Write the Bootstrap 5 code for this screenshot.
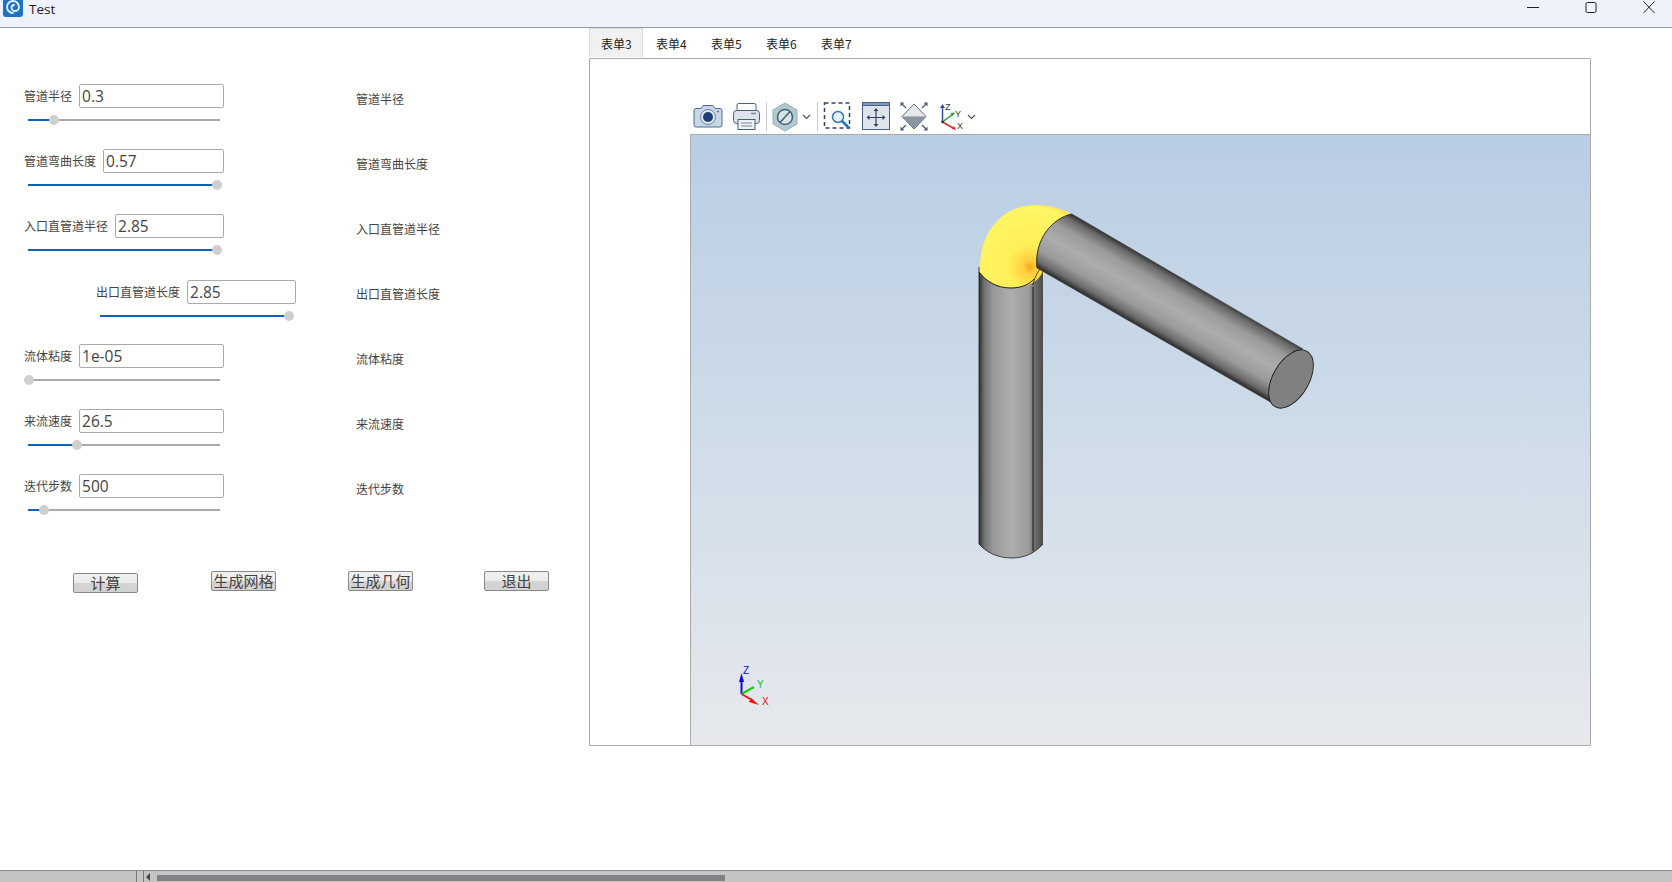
<!DOCTYPE html>
<html lang="zh">
<head>
<meta charset="utf-8">
<title>Test</title>
<link href="https://cdn.jsdelivr.net/npm/bootstrap@5.3.0/dist/css/bootstrap.min.css" rel="stylesheet">
<style>
html,body{height:100%;overflow:hidden}
body{background:#fff;font-family:"Noto Sans CJK SC","Noto Sans",sans-serif;font-size:12px;color:#444}
.shell{height:882px}
.titlebar{height:28px;background:#eef2fa;border-bottom:1px solid #999;color:#1f1f1f;font-family:"Open Sans","Noto Sans",sans-serif;font-size:13.500px}
.titlebar .ttl{margin-left:6px;line-height:18px}
.logo{margin-left:3px;margin-top:-3px}
.winbtns{gap:46px;margin-right:17px}
.workspace{height:842px}
.leftpanel{width:589px;padding-top:56px;flex:none}
.rowitem{height:65px}
.rowshift{margin-top:1px;margin-bottom:-1px}
.rowshift .echo{padding-top:2px}
.field{width:356px;padding-left:24px;flex:none}
.fieldwide{width:356px;padding-left:96px;flex:none}
.fieldline{height:24px;width:200px}
.fieldlabel{white-space:nowrap;margin-right:7px;line-height:24px;color:#444}
.valbox.form-control{height:24px;min-height:24px;padding:0 2px;border:1px solid #aaa;border-radius:2px;font-family:"Open Sans","Noto Sans",sans-serif;font-size:15.500px;line-height:22px;color:#444;flex:1 1 0;min-width:0;box-shadow:none}
.track{position:relative;width:192px;height:2px;background:#aaa;margin:11px 0 0 4px}
.trackfill{height:2px;background:#0f62b5}
.knob{position:absolute;top:-4px;width:10px;height:10px;margin-left:-5px;border-radius:50%;background:#cfcfcf}
.echo{line-height:24px;padding-top:3px;color:#444}
.btnrow{margin:32px 0 0 73px}
.act.btn{width:65px;height:20px;padding:0;border:1px solid #888;border-radius:2px;font-size:15px;line-height:16px;color:#444;background:linear-gradient(#f0f0f0 0,#ebebeb 50%,#d4d4d4 50%,#d2d2d2 100%)}
.actlow{margin-top:2px}
.gapa{margin-left:73px}
.gapb{margin-left:72px}
.gapc{margin-left:71px}
.tabzone{width:1002px;flex:none}
.tabstrip{height:30px}
.tabitem{width:55px;height:29px;padding-left:12px;line-height:32px;color:#222;white-space:nowrap;text-decoration:none}
.tabitem.sel{width:54px;background:#f1f1f1;border:1px solid #ddd;border-bottom:0;padding-left:11px;margin-right:1px;line-height:30px}
.tabpane{height:688px;border:1px solid #aaa;border-radius:1px;padding-left:100px}
.toolline{height:75px;padding-top:41px}
.toolline svg{display:block;flex:none}
.viewer{height:611px;border-top:1px solid #aaa;border-left:1px solid #aaa;background:linear-gradient(#b9cde3 0,#cddbe9 45%,#e6e8ec 100%);overflow:hidden}
.viewer svg{display:block}
.statusline{height:12px;border-top:1px solid #8a8a8a;background:#c4c4c4;padding-left:136px}
.sbdiv{width:1px;height:11px;background:#777;flex:none}
.sbdivb{margin-left:6px}
.sbarrow{width:0;height:0;border-top:4px solid transparent;border-bottom:4px solid transparent;border-right:4px solid #444;margin:2px 0 0 2px;flex:none}
.sbthumb{width:568px;height:6px;background:#7f8386;margin:4px 0 0 7px;flex:none}
</style>
</head>
<body>
<div class="shell d-flex flex-column">
  <div class="titlebar d-flex align-items-start justify-content-between">
    <div class="d-flex align-items-start">
      <svg class="logo" width="20" height="20" viewBox="0 0 20 20"><rect width="20" height="20" rx="3" fill="#1c75c4"/><path d="M10 16a6 6 0 1 1 6-6c0 2.600-2 4-4 4a3.500 3.500 0 0 1-3.500-3.500A2.600 2.600 0 0 1 11 8" fill="none" stroke="#e6f2fb" stroke-width="1.800" stroke-linecap="round"/></svg>
      <span class="ttl">Test</span>
    </div>
    <div class="winbtns d-flex align-items-start">
      <svg width="12" height="14" viewBox="0 0 12 14"><path d="M0 7.500H12" stroke="#222"/></svg>
      <svg width="12" height="14" viewBox="0 0 12 14"><rect x="1" y="2.500" width="10" height="10" rx="1.500" fill="none" stroke="#222"/></svg>
      <svg width="12" height="14" viewBox="0 0 12 14"><path d="M.5 1.500L11.500 13M11.500 1.500L.5 13" stroke="#222"/></svg>
    </div>
  </div>
  <div class="workspace d-flex">
    <div class="leftpanel">
      <div class="rowitem d-flex">
        <div class="field"><div class="fieldline d-flex"><span class="fieldlabel">管道半径</span><input class="form-control valbox" value="0.3"></div>
          <div class="track"><div class="trackfill" style="width:13.500%"></div><div class="knob" style="left:13.500%"></div></div></div>
        <div class="echo">管道半径</div>
      </div>
      <div class="rowitem d-flex">
        <div class="field"><div class="fieldline d-flex"><span class="fieldlabel">管道弯曲长度</span><input class="form-control valbox" value="0.57"></div>
          <div class="track"><div class="trackfill" style="width:98.500%"></div><div class="knob" style="left:98.500%"></div></div></div>
        <div class="echo">管道弯曲长度</div>
      </div>
      <div class="rowitem d-flex">
        <div class="field"><div class="fieldline d-flex"><span class="fieldlabel">入口直管道半径</span><input class="form-control valbox" value="2.85"></div>
          <div class="track"><div class="trackfill" style="width:98.500%"></div><div class="knob" style="left:98.500%"></div></div></div>
        <div class="echo">入口直管道半径</div>
      </div>
      <div class="rowitem rowshift d-flex">
        <div class="fieldwide"><div class="fieldline d-flex"><span class="fieldlabel">出口直管道长度</span><input class="form-control valbox" value="2.85"></div>
          <div class="track"><div class="trackfill" style="width:98.500%"></div><div class="knob" style="left:98.500%"></div></div></div>
        <div class="echo">出口直管道长度</div>
      </div>
      <div class="rowitem d-flex">
        <div class="field"><div class="fieldline d-flex"><span class="fieldlabel">流体粘度</span><input class="form-control valbox" value="1e-05"></div>
          <div class="track"><div class="trackfill" style="width:0.500%"></div><div class="knob" style="left:0.500%"></div></div></div>
        <div class="echo">流体粘度</div>
      </div>
      <div class="rowitem d-flex">
        <div class="field"><div class="fieldline d-flex"><span class="fieldlabel">来流速度</span><input class="form-control valbox" value="26.5"></div>
          <div class="track"><div class="trackfill" style="width:25.500%"></div><div class="knob" style="left:25.500%"></div></div></div>
        <div class="echo">来流速度</div>
      </div>
      <div class="rowitem d-flex">
        <div class="field"><div class="fieldline d-flex"><span class="fieldlabel">迭代步数</span><input class="form-control valbox" value="500"></div>
          <div class="track"><div class="trackfill" style="width:8.500%"></div><div class="knob" style="left:8.500%"></div></div></div>
        <div class="echo">迭代步数</div>
      </div>
      <div class="btnrow d-flex align-items-start">
        <button class="btn act actlow" type="button">计算</button>
        <button class="btn act gapa" type="button">生成网格</button>
        <button class="btn act gapb" type="button">生成几何</button>
        <button class="btn act gapc" type="button">退出</button>
      </div>
    </div>
    <div class="tabzone">
      <div class="tabstrip d-flex align-items-start">
        <a class="tabitem sel" href="#">表单3</a>
        <a class="tabitem" href="#">表单4</a>
        <a class="tabitem" href="#">表单5</a>
        <a class="tabitem" href="#">表单6</a>
        <a class="tabitem" href="#">表单7</a>
      </div>
      <div class="tabpane">
        <div class="toolline">
          <svg width="290" height="32" viewBox="690 100 290 32">
            <!-- camera -->
            <path d="M696 108.500h5l2-3h10l2 3h5a2 2 0 0 1 2 2v14.500a2 2 0 0 1-2 2h-24a2 2 0 0 1-2-2v-14.500a2 2 0 0 1 2-2z" fill="#c9d6e6" stroke="#4e6a94" stroke-width="1"/>
            <circle cx="708" cy="117" r="7.500" fill="#dfe7f1" stroke="#6b83a6"/><circle cx="708" cy="117" r="5" fill="#1f3f78"/>
            <circle cx="718" cy="111.500" r="1" fill="#4e6a94"/>
            <!-- printer -->
            <rect x="737" y="103.500" width="19" height="9" rx="1.500" fill="#fff" stroke="#4e5f78"/>
            <rect x="733.500" y="110.500" width="26" height="13" rx="3" fill="#dde3ea" stroke="#4e5f78"/>
            <rect x="738" y="119.500" width="17" height="10" fill="#eef1f5" stroke="#4e5f78"/>
            <path d="M741 123h11M741 126h11" stroke="#7c8a9c"/><path d="M751 113.500h5" stroke="#7c8a9c" stroke-width="1.500"/>
            <path d="M766.500 102v29" stroke="#c8c8c8"/>
            <!-- prohibit -->
            <path d="M785 103l12 7v14l-12 7-12-7v-14z" fill="#b4c8ce" stroke="#8fb0b8"/>
            <circle cx="785" cy="117" r="7.500" fill="#d9e4e6" stroke="#3d6a76" stroke-width="1.600"/><path d="M780 122.500L790 111.500" stroke="#3d6a76" stroke-width="1.600"/>
            <path d="M803 115l3.500 3.500 3.500-3.500" fill="none" stroke="#555" stroke-width="1.200"/>
            <path d="M817.500 102v29" stroke="#c8c8c8"/>
            <!-- zoom box -->
            <rect x="824.500" y="103" width="25" height="25" fill="none" stroke="#2e4468" stroke-width="1.500" stroke-dasharray="4 3"/>
            <circle cx="838" cy="117" r="5.500" fill="#eaf1f8" stroke="#3a78b8" stroke-width="1.500"/><path d="M842 121l7 7" stroke="#1e78c8" stroke-width="2.600"/>
            <!-- pan -->
            <rect x="862.500" y="102.500" width="27" height="27" fill="#dfe3ec" stroke="#47608a"/><rect x="862.500" y="102.500" width="27" height="3" fill="#8499bb" stroke="#47608a"/>
            <path d="M876 110v15M868.500 117.500h15" stroke="#2d4468" stroke-width="1.200"/>
            <path d="M876 108l-2.500 3h5zM876 127l-2.500-3h5zM866.500 117.500l3-2.500v5zM885.500 117.500l-3-2.500v5z" fill="#2d4468"/>
            <!-- fit -->
            <path d="M914 104l12 12.500-12 12.500-12-12.500z" fill="#d6dbe3"/>
            <path d="M914 104.500l11.500 12h-23z" fill="#e4e7ec"/><path d="M914 128.500l11.500-12h-23z" fill="#8e95a2"/>
            <path d="M914 104l12 12.500-12 12.500-12-12.500z" fill="none" stroke="#5f6b7c"/>
            <path d="M901 103l5 5M927 103l-5 5M901 130l5-5M927 130l-5-5" stroke="#47608a" stroke-width="1.400"/>
            <path d="M900.500 102.500h4l-4 4zM927.500 102.500h-4l4 4zM900.500 130.500h4l-4-4zM927.500 130.500h-4l4-4z" fill="#47608a"/>
            <!-- axes -->
            <path d="M942.500 122V107" stroke="#2a4fa8" stroke-width="1.500"/><path d="M942.500 104l-2.500 4h5z" fill="#2a4fa8"/>
            <path d="M942.500 122L953 114" stroke="#249a3c" stroke-width="1.500"/><path d="M955 112.500l-4.500.5 2 3z" fill="#249a3c"/>
            <path d="M942.500 122L953 128" stroke="#e02828" stroke-width="1.500"/><path d="M956 130l-2-4-2 3z" fill="#e02828"/>
            <circle cx="942.500" cy="122" r="1.300" fill="#333"/>
            <text x="945" y="110" font-family="Liberation Sans,sans-serif" font-size="9" fill="#333">Z</text>
            <text x="955" y="116.500" font-family="Liberation Sans,sans-serif" font-size="9" fill="#333">Y</text>
            <text x="957" y="129" font-family="Liberation Sans,sans-serif" font-size="9" fill="#333">X</text>
            <path d="M968 115l3.500 3.500 3.500-3.500" fill="none" stroke="#555" stroke-width="1.200"/>
          </svg>
        </div>
        <div class="viewer">
          <svg width="899" height="610" viewBox="691 135 899 610">
            <defs>
              <linearGradient id="vcyl" gradientUnits="userSpaceOnUse" x1="979" y1="0" x2="1043" y2="0">
                <stop offset="0" stop-color="#2e2e2e"/><stop offset=".08" stop-color="#707070"/><stop offset=".22" stop-color="#989898"/><stop offset=".5" stop-color="#adadad"/><stop offset=".78" stop-color="#9c9c9c"/><stop offset=".85" stop-color="#747474"/><stop offset="1" stop-color="#4a4a4a"/>
              </linearGradient>
              <linearGradient id="hcyl" gradientUnits="userSpaceOnUse" x1="1187" y1="281" x2="1156" y2="335">
                <stop offset="0" stop-color="#383838"/><stop offset=".08" stop-color="#6a6a6a"/><stop offset=".25" stop-color="#9b9b9b"/><stop offset=".5" stop-color="#adadad"/><stop offset=".75" stop-color="#9b9b9b"/><stop offset=".92" stop-color="#6a6a6a"/><stop offset="1" stop-color="#333"/>
              </linearGradient>
              <radialGradient id="elbow" gradientUnits="userSpaceOnUse" cx="1030" cy="267" r="70">
                <stop offset="0" stop-color="#f7a81f"/><stop offset=".1" stop-color="#ffcf3e"/><stop offset=".3" stop-color="#ffee58"/><stop offset=".85" stop-color="#fff664"/><stop offset="1" stop-color="#ffd83e"/>
              </radialGradient>
            </defs>
            <path d="M980 267C980 232 1003 205 1035 205C1052 205 1065 210 1073 215L1045 272L1040 290L1000 292L980 275Z" fill="url(#elbow)"/>
            <path d="M979 267V544C986 552 997 558 1012 558C1026 558 1036 552 1043 544V270C1041 280 1028 288 1011 288C996 288 986 281 979 272Z" fill="url(#vcyl)"/>
            <path d="M979 267V544C986 552 997 558 1012 558C1026 558 1036 552 1043 544" fill="none" stroke="#222" stroke-width=".8"/>
            <path d="M979 272C986 281 996 288 1011 288C1022 288 1030 284 1034 279" fill="none" stroke="#1a1a1a" stroke-width="1"/>
            <path d="M1033 287V551" stroke="#1a1a1a" stroke-width="1"/>
            <path d="M1033 285C1034 278 1038 272 1040 269" fill="none" stroke="#1a1a1a" stroke-width=".8"/>
            <path d="M1072 214L1303 349L1272 403L1037 268C1034 240 1052 218 1072 214Z" fill="url(#hcyl)"/>
            <path d="M1037 268C1034 240 1052 218 1072 214" fill="none" stroke="#1c1c1c" stroke-width=".9"/>
            <path d="M1072 214L1303 349M1272 403L1037 268" fill="none" stroke="#333" stroke-width=".5"/>
            <ellipse cx="1291" cy="379" rx="32" ry="18" transform="rotate(-60 1291 379)" fill="#808080" stroke="#1f1f1f" stroke-width=".9"/>
            <!-- triad -->
            <path d="M741.500 694V680" stroke="#0a0ae0" stroke-width="2"/><path d="M741.500 673l-2.500 9h5z" fill="#0a0ae0"/>
            <path d="M741.500 694L754 687" stroke="#10d010" stroke-width="2.200"/>
            <path d="M741.500 694L752 700" stroke="#f01010" stroke-width="2"/><path d="M759 705l-8-7-2 4z" fill="#f01010"/>
            <text x="743" y="674" font-family="Liberation Sans,sans-serif" font-size="10" fill="#0a0ae0">Z</text>
            <text x="757" y="688" font-family="Liberation Sans,sans-serif" font-size="10" fill="#10c010">Y</text>
            <text x="762" y="705" font-family="Liberation Sans,sans-serif" font-size="10" fill="#f01010">X</text>
          </svg>
        </div>
      </div>
    </div>
  </div>
  <div class="statusline d-flex">
    <div class="sbdiv"></div>
    <div class="sbdiv sbdivb"></div>
    <div class="sbarrow"></div>
    <div class="sbthumb"></div>
  </div>
</div>
<script src="https://cdn.jsdelivr.net/npm/bootstrap@5.3.0/dist/js/bootstrap.bundle.min.js"></script>
</body>
</html>
